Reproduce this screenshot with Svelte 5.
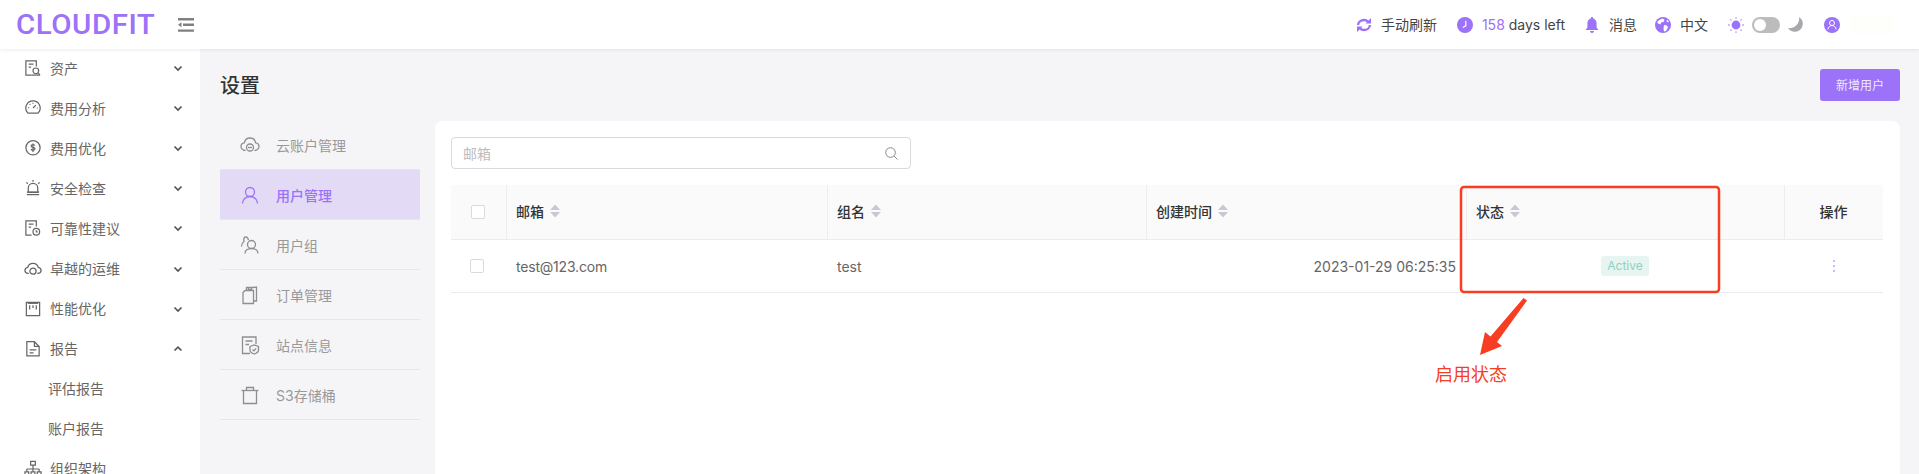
<script>
  const ic = {
    asset: ['M13 8V2H2v15h6', 'M5 5.500h5M5 8.500h2.500', 'M8 17h9', 'M12.500 9.500a3 3 0 1 0 0 6 3 3 0 0 0 0-6zM14.800 14.800l2 2'],
    gauge: ['M9.500 2a7.500 7.500 0 0 0-5.800 12.300c.4.5.9.7 1.500.7h8.600c.6 0 1.100-.2 1.500-.7A7.500 7.500 0 0 0 9.500 2z', 'M9.500 9.500l3-3', 'M4.500 9h1M13.500 9.500h1M6 5.500l.7.7M9.500 4v1'],
    dollar: ['M9.500 1.800a7.500 7.500 0 1 0 0 15 7.500 7.500 0 0 0 0-15z', 'M11.500 7c-.3-.8-1.100-1.200-2-1.200-1.200 0-2 .6-2 1.500 0 2 4.100 1 4.100 3 0 1-.9 1.600-2.100 1.600-1 0-1.800-.5-2.100-1.300M9.500 4.800v8.800'],
    alarm: ['M3 16.500h13', 'M4.500 14V9.500a5 5 0 0 1 10 0V14z', 'M3 13.800h13', 'M9.500 1v2M2.500 3.500l1.500 1.500M16.500 3.500L15 5'],
    docclock: ['M13 8V2H2v15h6', 'M5 5.500h5M5 8.500h2.500', 'M13 10a3.500 3.500 0 1 0 0 7 3.500 3.500 0 0 0 0-7zM13 11.800v1.700h1.500'],
    cloud: ['M5 14.200H4.500C2.500 14 1 12.400 1 11c0-1.700 1.600-3 3-3.200C4.500 5 6.800 3.500 9.500 3.500c2.700 0 5 1.500 5.500 4.300 1.500.2 3 1.500 3 3.200 0 1.500-1.500 3-3.500 3.200H14', 'M9.500 8.500a3.200 3.200 0 1 0 0 6.500 3.200 3.200 0 0 0 0-6.500z'],
    board: ['M2.500 2.500h14v14h-14z', 'M6 5.500V10M9.500 5.500V8.500M13 5.500V10', 'M4 3.500h11'],
    file: ['M3 1.800h8l5 5v10H3z', 'M11 1.800v5h5', 'M6 10.500h7M6 13.500h4'],
    org: ['M7 1.500h5v4H7zM9.500 5.500v4M3 9.500h13M3 9.500v3M16 9.500v3M9.500 9.500v3', 'M1 12.500h4v4H1zM7.500 12.500h4v4h-4zM14 12.500h4v4h-4z'],
    scloud: ['M5.500 15.500C3 15.300 1 13.500 1 11.500c0-2 1.700-3.400 3.300-3.600C5 4.800 7.300 3 10 3c2.800 0 5.100 1.900 5.700 4.900 1.700.2 3.300 1.700 3.300 3.600 0 2-2 3.800-4.500 4', 'M10 9a3.500 3.500 0 1 0 0 7 3.500 3.500 0 0 0 0-7z', 'M8 12.500h4'],
    user: ['M10 2.500a4.500 4.500 0 1 0 0 9 4.500 4.500 0 0 0 0-9z', 'M2.500 18.500c0-4 3.300-7 7.500-7s7.500 3 7.500 7'],
    group: ['M11.500 5.500a4 4 0 1 0 0 8 4 4 0 0 0 0-8z', 'M5 18.500c0-3 2.800-5 6.500-5s6.500 2 6.500 5', 'M8.500 5C8 3 6.500 1.800 5.500 2S3.500 4 4 6.500c-1.500 1-2.500 3-2.500 5'],
    order: ['M3 7.500l2-2h8.500v13H3z', 'M6.500 5.500V2.500h2v2h3v-2h1.500l3.500-.5v14h-3', 'M8.500 2.500h3'],
    site: ['M10 18.500H2.500V2H16v7', 'M5.500 6h7M5.500 9.500h3.500', 'M10 11.500l4.200-1.500 4.300 1.500v3.500c0 2-2.300 3.300-4.300 4-2-.7-4.200-2-4.200-4z', 'M12.500 14.500l1.400 1.400 2.200-2.500'],
    trash: ['M1.500 5.500h17', 'M6.500 5.500V2.500h7v3', 'M3.500 5.500v13h13v-13']
  };
  const menu = [
    ['资产', ic.asset], ['费用分析', ic.gauge], ['费用优化', ic.dollar], ['安全检查', ic.alarm],
    ['可靠性建议', ic.docclock], ['卓越的运维', ic.cloud], ['性能优化', ic.board]
  ];
  const subs = [
    ['云账户管理', ic.scloud], ['用户管理', ic.user], ['用户组', ic.group],
    ['订单管理', ic.order], ['站点信息', ic.site], ['S3存储桶', ic.trash]
  ];
</script>

{#snippet strokes(paths, size, box)}
  <svg class="ico" width={size} height={size} viewBox="0 0 {box} {box}" fill="none" stroke="currentColor" stroke-width="1.300">
    {#each paths as d}<path {d} />{/each}
  </svg>
{/snippet}

{#snippet chevron(up)}
  <svg class="chev" width="10" height="10" viewBox="0 0 10 10" fill="none" stroke="#555" stroke-width="1.700">
    <path d={up ? 'M1.500 6.500L5 3.200l3.500 3.300' : 'M1.500 3.500L5 7l3.500-3.500'} />
  </svg>
{/snippet}

{#snippet sort()}
  <svg class="sort" width="10" height="14" viewBox="0 0 10 14" fill="#c8c8d2">
    <path d="M5 0.500L10 6H0zM0 8h10l-5 5.500z" />
  </svg>
{/snippet}

<div class="page">
  <header class="top">
    <div class="brand">
      <span class="logo-box"><span class="logo">CLOUDFIT</span></span>
      <svg class="fold" width="16" height="14" viewBox="0 0 16 14" fill="#808080">
        <path d="M0 0h16v2.400H0zM5 5.600h11V8H5zM0 11.400h16v2.400H0zM3.500 4.200v5L0 6.700z" />
      </svg>
    </div>
    <div class="tools">
      <div class="tool">
        <svg width="16" height="16" viewBox="0 0 16 16">
          <path d="M2 8c.3-3 3-5 6-5 1.700 0 3 .6 4 1.500M14 8c-.3 3-3 5-6 5-1.700 0-3-.6-4-1.500" fill="none" stroke="#9b72f8" stroke-width="2.400" />
          <path d="M9.500 6.500H15V1zM6.500 9.500H1V15z" fill="#9b72f8" />
        </svg>
        <span class="cjk">手动刷新</span>
      </div>
      <div class="tool tight">
        <svg width="16" height="16" viewBox="0 0 16 16">
          <circle cx="8" cy="8" r="8" fill="#9b72f8" /><path d="M8.800 3.800v5l-3 1.800" fill="none" stroke="#fff" stroke-width="1.200" />
        </svg>
        <span><b class="days">158</b> days left</span>
      </div>
      <div class="tool closer">
        <svg width="16" height="16" viewBox="0 0 16 16" fill="#9b72f8">
          <path d="M8 0a1.200 1.200 0 0 1 1.200 1.400C11.500 2 12.600 4 12.600 6.500v4L14.500 13h-13l1.900-2.500v-4C3.400 4 4.500 2 6.800 1.400A1.200 1.200 0 0 1 8 0zM6 14h4a2 2 0 0 1-4 0z" />
        </svg>
        <span class="cjk">消息</span>
      </div>
      <div class="tool">
        <svg width="16" height="16" viewBox="0 0 16 16">
          <circle cx="8" cy="8" r="8" fill="#9b72f8" />
          <path d="M5 2.500l3-1 1.500 1.500-1 2-2.500.5-.5 2-2.500-1L2 5zM9 8l3 .5 1 2-2 3.500-2 .5-.5-3zM12 2.500l2 2-1 1-1.500-1z" fill="#fff" />
        </svg>
        <span class="cjk">中文</span>
      </div>
      <div class="theme">
        <svg width="16" height="16" viewBox="0 0 16 16" fill="none">
          <circle cx="8" cy="8" r="4.400" fill="#9b72f8" />
          <path d="M8 0v1.800M8 14.200V16M0 8h1.800M14.200 8H16M2.300 2.300l1.200 1.200M12.500 12.500l1.200 1.200M2.300 13.700l1.200-1.200M12.500 3.500l1.200-1.200" stroke="#b9a0fa" stroke-width="1.300" />
        </svg>
        <span class="switch"><i></i></span>
        <svg width="16" height="16" viewBox="0 0 16 16" fill="#a8a8ac">
          <path d="M11 0A8 8 0 1 1 0 11 9.500 9.500 0 0 0 11 0z" />
        </svg>
      </div>
      <div class="me">
        <svg width="16" height="16" viewBox="0 0 16 16">
          <circle cx="8" cy="8" r="8" fill="#9b72f8" />
          <path d="M8 3.500a2.500 2.500 0 1 0 0 5 2.500 2.500 0 0 0 0-5zM3.800 12.500c.4-2.400 2.200-4 4.200-4s3.800 1.600 4.200 4" fill="none" stroke="#fff" stroke-width="1" />
        </svg>
        <span class="blur"></span>
      </div>
    </div>
  </header>

  <div class="body">
    <aside class="side">
      {#each menu as [label, icon]}
        <div class="mi">
          <span class="mi-ic">{@render strokes(icon, 18, 19)}</span>
          <span class="mi-t">{label}</span>
          {@render chevron(false)}
        </div>
      {/each}
      <div class="mi">
        <span class="mi-ic">{@render strokes(ic.file, 18, 19)}</span>
        <span class="mi-t">报告</span>
        {@render chevron(true)}
      </div>
      <div class="mi sub">评估报告</div>
      <div class="mi sub">账户报告</div>
      <div class="mi">
        <span class="mi-ic">{@render strokes(ic.org, 18, 19)}</span>
        <span class="mi-t">组织架构</span>
      </div>
    </aside>

    <main class="main">
      <div class="head">
        <h1>设置</h1>
        <button class="add">新增用户</button>
      </div>
      <div class="cols">
        <nav class="subnav">
          {#each subs as [label, icon], i}
            <div class="si" class:on={i === 1}>
              {@render strokes(icon, 20, 20)}
              <span>{label}</span>
            </div>
          {/each}
        </nav>
        <section class="card">
          <div class="search">
            <span>邮箱</span>
            <svg width="13" height="13" viewBox="0 0 13 13" fill="none" stroke="#888" stroke-width="1">
              <circle cx="5.500" cy="5.500" r="4.800" /><path d="M9 9l3.500 3.500" />
            </svg>
          </div>
          <div class="table">
            <div class="row thead">
              <div class="c chk"><span class="box"></span></div>
              <div class="c">邮箱{@render sort()}</div>
              <div class="c">组名{@render sort()}</div>
              <div class="c">创建时间{@render sort()}</div>
              <div class="c">状态{@render sort()}</div>
              <div class="c mid">操作</div>
            </div>
            <div class="row tbody">
              <div class="c chk"><span class="box"></span></div>
              <div class="c mail">test@123.com</div>
              <div class="c">test</div>
              <div class="c right">2023-01-29 06:25:35</div>
              <div class="c mid"><span class="tag">Active</span></div>
              <div class="c mid"><span class="dots"><i></i><i></i><i></i></span></div>
            </div>
          </div>
        </section>
      </div>
    </main>
  </div>

  <svg class="mark" width="1919" height="474" viewBox="0 0 1919 474" fill="none">
    <rect x="1461" y="187" width="258" height="105" rx="3" stroke="#f83e22" stroke-width="2.500" />
    <path d="M1523.500 298L1527 300.500 1497 342 1502 346 1480 355 1485 332 1490.500 336.500z" fill="#f83e22" />
  </svg>
  <div class="note">启用状态</div>
</div>

<style>
  :global(body) { margin: 0; background: #f5f5f7; }
  .page {
    position: relative;
    height: 474px;
    overflow: hidden;
    font-family: Inter, "Noto Sans CJK SC", sans-serif;
    font-size: 14px;
    color: #666;
  }
  .ico { display: block; flex: none; }
  .top {
    position: relative;
    z-index: 2;
    height: 49px;
    background: #fff;
    box-shadow: 0 1px 4px rgba(0, 0, 0, .08);
    display: flex;
    align-items: center;
    justify-content: space-between;
  }
  .brand { display: flex; align-items: center; padding-left: 16px; }
  .logo-box { display: block; width: 144px; }
  .logo {
    display: inline-block;
    font-family: Roboto, sans-serif;
    font-size: 27px;
    font-weight: 500;
    letter-spacing: .5px;
    line-height: 30px;
    color: #9b72f8;
    white-space: nowrap;
    transform: scaleX(1.090);
    transform-origin: left center;
  }
  .fold { margin-left: 18px; }
  .tools { display: flex; align-items: center; padding-right: 26px; color: #444; }
  .tool { display: flex; align-items: center; gap: 9px; margin-right: 20px; white-space: nowrap; }
  .tool.tight { margin-right: 19px; }
  .tool.closer { margin-right: 18px; }
  .cjk { padding-bottom: 2px; }
  .days { font-weight: 400; color: #9b72f8; }
  .theme { display: flex; align-items: center; gap: 8px; margin-right: 20px; }
  .switch {
    display: block;
    width: 28px;
    height: 16px;
    border-radius: 8px;
    background: #bcbcbc;
    position: relative;
  }
  .switch i {
    position: absolute;
    left: 2px;
    top: 2px;
    width: 12px;
    height: 12px;
    border-radius: 50%;
    background: #fff;
  }
  .me { display: flex; align-items: center; gap: 10px; }
  .blur { width: 43px; height: 18px; background: #fefefb; }

  .body { display: flex; height: 425px; }
  .side { width: 200px; flex: none; background: #fff; overflow: hidden; }
  .mi {
    height: 40.100px;
    display: flex;
    align-items: center;
    padding: 0 17px 0 24px;
    color: #666;
    white-space: nowrap;
    position: relative;
    top: -1px;
  }
  .mi-ic { width: 26px; flex: none; color: #666; }
  .mi-t { flex: 1; padding-bottom: 1px; }
  .chev { flex: none; }
  .sub { padding-left: 48px; padding-bottom: 1px; box-sizing: border-box; }

  .main { flex: 1; min-width: 0; padding: 20px 19px 0 20px; }
  .head { display: flex; align-items: center; justify-content: space-between; height: 32px; margin-bottom: 19px; }
  h1 { margin: 0 0 2px; font-size: 20px; font-weight: 500; color: #333; }
  .add {
    width: 80px;
    height: 32px;
    padding: 0 0 2px;
    border: 0;
    border-radius: 3px;
    background: #9b72f8;
    color: #f0e9ff;
    font: inherit;
    font-size: 12px;
  }
  .cols { display: flex; gap: 15px; }
  .subnav { width: 200px; flex: none; }
  .si {
    height: 49px;
    border-bottom: 1px solid #e7e7eb;
    display: flex;
    align-items: center;
    gap: 16px;
    padding-left: 20px;
    color: #999;
  }
  .si .ico { color: #8e8e8e; }
  .si.on .ico { color: #9b72f8; }
  .si.on { background: #e3daf6; color: #9b72f8; font-weight: 500; }
  .card {
    flex: 1;
    min-width: 0;
    height: 353px;
    margin-top: 1px;
    background: #fff;
    border-radius: 8px 8px 0 0;
    padding: 16px 17px 0 16px;
  }
  .search {
    box-sizing: border-box;
    width: 460px;
    height: 32px;
    border: 1px solid #d9d9de;
    border-radius: 4px;
    display: flex;
    align-items: center;
    justify-content: space-between;
    padding: 0 12px 0 11px;
    color: #bdbdbd;
  }
  .table { margin-top: 16px; }
  .row { display: grid; grid-template-columns: 55px 321px 319px 320px 318px 99px; }
  .thead { height: 54px; background: #fafafa; border-bottom: 1px solid #ececf0; color: #333; font-weight: 500; }
  .tbody { height: 52px; border-bottom: 1px solid #ececf0; color: #666; }
  .c { display: flex; align-items: center; padding: 0 10px; min-width: 0; white-space: nowrap; }
  .thead .c { border-left: 1px solid #ededf0; padding: 0 10px 2px 9px; }
  .thead .c:first-child { border-left: 0; padding: 0 2px 0 0; }
  .chk { justify-content: center; }
  .tbody .chk { padding: 0 3px 0 0; }
  .box { display: block; width: 14px; height: 14px; box-sizing: border-box; border: 1px solid #d9d9de; border-radius: 2px; background: #fff; }
  .sort { margin-left: 6px; }
  .mail { letter-spacing: -.2px; }
  .right { justify-content: flex-end; }
  .mid { justify-content: center; }
  .tag {
    padding: 0 6px;
    height: 20px;
    line-height: 20px;
    border-radius: 3px;
    background: #e6f5f1;
    color: #8ed2bf;
    font-size: 12px;
  }
  .dots { display: flex; flex-direction: column; gap: 3px; }
  .dots i { display: block; width: 2px; height: 2px; border-radius: 50%; background: #b9a0fa; }

  .mark { position: absolute; left: 0; top: 0; z-index: 3; pointer-events: none; }
  .note { position: absolute; left: 1435px; top: 364px; z-index: 3; font-size: 18px; line-height: 22px; color: #f83e22; }
</style>
